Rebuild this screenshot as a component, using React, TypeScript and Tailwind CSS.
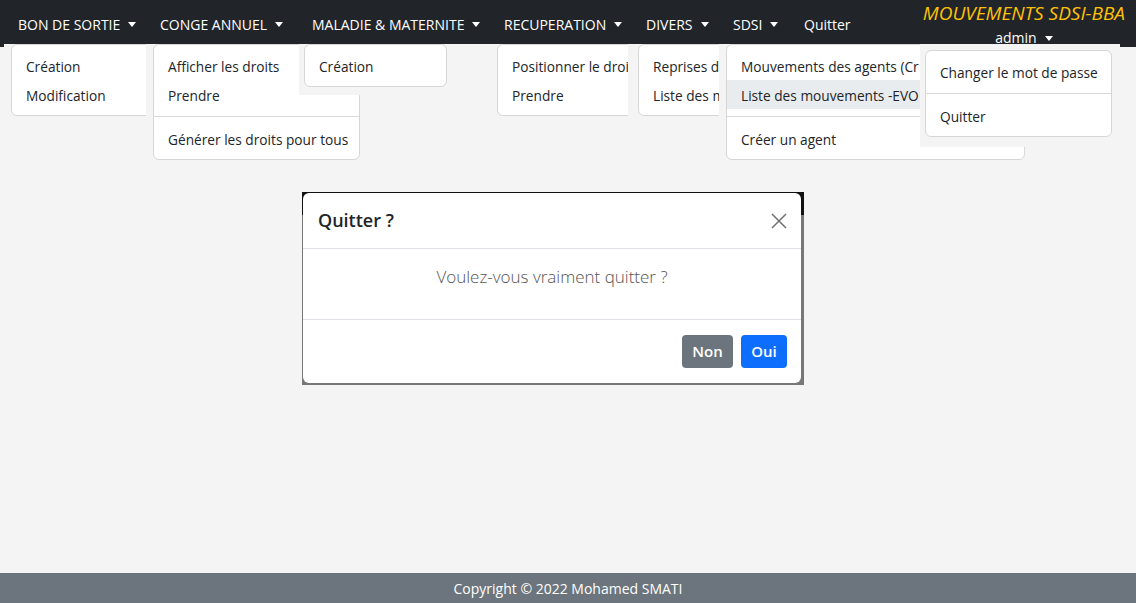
import React from "react";

type Item = { label: string; active?: boolean } | "divider";

const navItems = [
  { label: "BON DE SORTIE", w: "w-[142px]", caret: true },
  { label: "CONGE ANNUEL", w: "w-[152px]", caret: true },
  { label: "MALADIE & MATERNITE", w: "w-[192px]", caret: true },
  { label: "RECUPERATION", w: "w-[142px]", caret: true },
  { label: "DIVERS", w: "w-[87px]", caret: true },
  { label: "SDSI", w: "w-[71px]", caret: true },
  { label: "Quitter", w: "w-[70px]", caret: false },
];

const Caret = () => (
  <span className="inline-block ml-[8px] w-0 h-0 border-l-[4px] border-r-[4px] border-t-[5px] border-l-transparent border-r-transparent border-t-white" />
);

const Menu = ({ items, width }: { items: Item[]; width: string }) => (
  <div className={`${width} bg-white border border-[#d6d6d6] rounded-[6px] py-[6px] text-[13.7px] text-[#212529] overflow-hidden`}>
    {items.map((it, i) =>
      it === "divider" ? (
        <div key={i} className="my-[7px] border-t border-[#d9d9d9]" />
      ) : (
        <div
          key={i}
          className={`h-[29px] flex items-center pt-[3px] px-[14px] whitespace-nowrap ${it.active ? "bg-[#e9ecef]" : ""}`}
        >
          {it.label}
        </div>
      )
    )}
  </div>
);

export default function App() {
  return (
    <div className="relative h-[603px] flex flex-col bg-[#f4f4f4] font-['Open_Sans','Noto_Sans',sans-serif] overflow-hidden">
      {/* top bar */}
      <header className="h-[47px] shrink-0 bg-[#212529] flex justify-between">
        <ul className="flex pl-[10px]">
          {navItems.map((n) => (
            <li key={n.label} className={`${n.w} h-[47px] flex items-center pt-[2px] px-[8px] text-white text-[14px] whitespace-nowrap`}>
              {n.label}
              {n.caret && <Caret />}
            </li>
          ))}
        </ul>
        <div className="flex flex-col items-center pr-[11px]">
          <div className="mt-[2px] leading-[22px] text-[19px] italic text-[#ffc107]">MOUVEMENTS SDSI-BBA</div>
          <div className="mt-[4px] leading-[20px] text-[14px] text-white flex items-center">
            admin
            <Caret />
          </div>
        </div>
      </header>

      {/* open dropdowns, each one laid over the previous */}
      <div className="absolute left-[4px] top-[44px] w-[175px] h-[81px] pl-[7px] bg-[#f4f4f4]">
        <Menu width="w-[160px]" items={[{ label: "Création" }, { label: "Modification" }]} />
      </div>
      <div className="absolute left-[146px] top-[44px] w-[220px] h-[125px] pl-[7px] bg-[#f4f4f4]">
        <Menu
          width="w-[207px]"
          items={[{ label: "Afficher les droits" }, { label: "Prendre" }, "divider", { label: "Générer les droits pour tous" }]}
        />
      </div>
      <div className="absolute left-[299px] top-[44px] w-[191px] h-[51px] pl-[5px] bg-[#f4f4f4]">
        <Menu width="w-[143px]" items={[{ label: "Création" }]} />
      </div>
      <div className="absolute left-[490px] top-[44px] w-[210px] h-[81px] pl-[7px] bg-[#f4f4f4]">
        <Menu width="w-[200px]" items={[{ label: "Positionner le droi" }, { label: "Prendre" }]} />
      </div>
      <div className="absolute left-[628px] top-[44px] w-[210px] h-[81px] pl-[10px] bg-[#f4f4f4]">
        <Menu width="w-[200px]" items={[{ label: "Reprises d" }, { label: "Liste des m" }]} />
      </div>
      <div className="absolute left-[719px] top-[44px] w-[310px] h-[125px] pl-[7px] bg-[#f4f4f4]">
        <Menu
          width="w-[299px]"
          items={[
            { label: "Mouvements des agents (Cr" },
            { label: "Liste des mouvements -EVO", active: true },
            "divider",
            { label: "Créer un agent" },
          ]}
        />
      </div>
      <div className="absolute left-[920px] top-[44px] w-[200px] h-[103px] pl-[5px] pt-[6px] bg-[#f4f4f4]">
        <Menu width="w-[187px]" items={[{ label: "Changer le mot de passe" }, "divider", { label: "Quitter" }]} />
      </div>

      {/* confirm dialog */}
      <main className="flex-1 pt-[145px] pl-[302px]">
        <div className="w-[502px] pl-px pt-px pr-[3px] pb-[2px] bg-[linear-gradient(to_bottom,#111_0,#111_23px,#777_23px)]">
          <div className="bg-white rounded-[6px]">
            <div className="h-[56px] px-[15px] flex items-center justify-between border-b border-[#dee2e6]">
              <span className="text-[18px] font-semibold text-[#212529]">Quitter ?</span>
              <svg width="16" height="16" viewBox="0 0 16 16" className="mr-[-1px]">
                <path d="M1 1L15 15M15 1L1 15" stroke="#707070" strokeWidth="1.5" />
              </svg>
            </div>
            <div className="h-[70px] pt-[17px] text-center text-[17px] leading-[22px] font-light text-[#555]">
              Voulez-vous vraiment quitter ?
            </div>
            <div className="h-[64px] border-t border-[#dee2e6] flex items-center justify-end gap-[8px] pr-[14px]">
              <button className="w-[51px] h-[33px] rounded-[4px] bg-[#6c757d] text-white text-[15px] font-semibold">Non</button>
              <button className="w-[46px] h-[33px] rounded-[4px] bg-[#0d6efd] text-white text-[15px] font-semibold">Oui</button>
            </div>
          </div>
        </div>
      </main>

      <footer className="h-[30px] shrink-0 bg-[#6c757d] text-white text-[14px] flex items-center justify-center">
        Copyright © 2022 Mohamed SMATI
      </footer>
    </div>
  );
}
